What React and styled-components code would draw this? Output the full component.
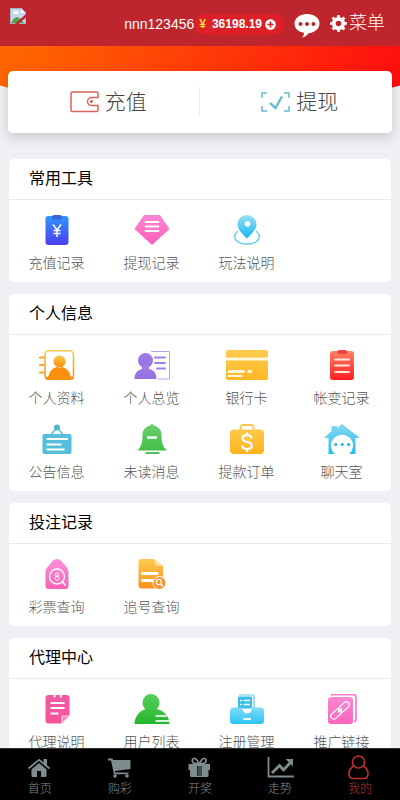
import * as React from "react";
import styled, { createGlobalStyle, css } from "styled-components";
import { FaPlusCircle } from "react-icons/fa";

const GlobalStyle = createGlobalStyle`
  * {
    box-sizing: border-box;
  }
  html {
    scrollbar-width: none;
  }
  body {
    margin: 0;
    background-color: #efeff4;
    font-family: "Liberation Sans", "Noto Sans CJK SC", sans-serif;
    font-weight: 300;
  }
  a {
    color: inherit;
    text-decoration: none;
  }
  button {
    border: none;
    padding: 0;
    background: none;
    color: inherit;
    font: inherit;
    cursor: pointer;
  }
  svg {
    display: block;
    flex: none;
  }
`;

const Page = styled.div`
  padding-bottom: 60px;
`;

const TopBar = styled.header`
  position: sticky;
  top: 0;
  z-index: 2;
  display: flex;
  align-items: center;
  height: 46px;
  padding: 2px 15px 0 10px;
  background-color: #bf252c;
  color: #ffffff;
`;

const Avatar = styled.a`
  align-self: flex-start;
  margin: 6px auto 0 0;
`;

const UserName = styled.span`
  font-size: 14px;
  font-weight: 400;
`;

const Balance = styled.button`
  && {
    display: flex;
    align-items: center;
    height: 21px;
    padding: 0 9px 0 5px;
    border-radius: 11px;
    background-color: #dd2027;
    font-size: 12px;
    font-weight: 700;
  }
  span {
    margin-right: 6px;
    color: #ffd83b;
  }
  svg {
    margin-left: 3px;
  }
`;

const ChatButton = styled.button`
  && {
    margin: 4px 10px 0 9px;
  }
`;

const MenuButton = styled.button`
  && {
    display: flex;
    align-items: center;
    gap: 2px;
    font-size: 18px;
    line-height: 24px;
  }
  && {
    padding-bottom: 3px;
  }
  svg {
    margin-top: 2px;
  }
`;

const Hero = styled.div`
  position: relative;
  padding: 25px 8px 0;
  &::before {
    content: "";
    position: absolute;
    inset: 0;
    background: linear-gradient(110deg, #ff6400 5%, #ff0f0f 95%);
    clip-path: ellipse(75% 100px at 50% -35px);
  }
`;

const Wallet = styled.div`
  position: relative;
  display: flex;
  align-items: center;
  height: 62px;
  border-radius: 5px;
  background-color: #ffffff;
  box-shadow: 0 5px 12px rgba(0, 0, 0, 0.15);
`;

const WalletLink = styled.a`
  flex: 1;
  display: flex;
  align-items: center;
  justify-content: center;
  gap: 6px;
  height: 30px;
  padding: 0 0 4px 10px;
  color: #444444;
  font-size: 21px;
  svg {
    margin-top: 4px;
  }
  & + & {
    border-left: 1px solid #eeeeee;
    padding-right: 2px;
  }
`;

const Sections = styled.main`
  display: flex;
  flex-direction: column;
  gap: 12px;
  padding: 26px 9px 0;
`;

const Section = styled.section`
  padding-bottom: 8px;
  border-radius: 5px;
  background-color: #ffffff;
`;

const SectionTitle = styled.h2`
  margin: 0;
  padding: 0 20px;
  border-bottom: 1px solid #ebebeb;
  color: #000000;
  font-size: 16px;
  font-weight: 400;
  line-height: 40px;
`;

const Grid = styled.div`
  display: grid;
  grid-template-columns: repeat(4, 1fr);
  padding-right: 2px;
`;

const Item = styled.a`
  display: flex;
  flex-direction: column;
  align-items: center;
  gap: 8px;
  padding: 15px 0 1px;
  color: #555555;
  font-size: 14px;
  line-height: 20px;
`;

const TabBar = styled.nav`
  position: fixed;
  right: 0;
  bottom: 0;
  left: 0;
  z-index: 2;
  display: flex;
  height: 52px;
  border-top: 1px solid #333333;
  background-color: #000000;
`;

const Tab = styled.a`
  flex: 1;
  display: flex;
  flex-direction: column;
  align-items: center;
  padding-top: 6px;
  color: #7f8c8d;
  font-size: 12px;
  line-height: 16px;
  svg {
    margin-bottom: 1px;
  }
  ${({ $active }) =>
    $active &&
    css`
      && {
        color: #c0302c;
      }
    `}
`;

/* vertical gradient shared by the menu icons */
const Fade = ({ id, from, to }) => (
  <linearGradient id={id} x1="0" y1="0" x2="0" y2="1">
    <stop offset="0" stopColor={from} />
    <stop offset="1" stopColor={to} />
  </linearGradient>
);

const Icon = ({ id, from, to, children }) => (
  <svg width="44" height="30" viewBox="0 0 44 30" fill="none" aria-hidden="true">
    <defs>
      <Fade id={id} from={from} to={to} />
    </defs>
    {children}
  </svg>
);

const RechargeIcon = () => (
  <Icon id="recharge" from="#2f96fb" to="#4f3df0">
    <rect x="10.500" y="1" width="23" height="29" rx="3" fill="url(#recharge)" />
    <rect x="17" y="0" width="10" height="4.500" rx="2" fill="#3a62d8" />
    <path d="M18 9.500l4 5.500 4-5.500M22 15v7M18.500 15.500h7M18.500 18.500h7" stroke="#fff" strokeWidth="1.500" />
  </Icon>
);

const WithdrawIcon = () => (
  <Icon id="withdraw" from="#fb87d3" to="#fd5fb9">
    <path d="M14 0h16l9.500 14L22 30 4.500 14z" fill="url(#withdraw)" />
    <path d="M15.500 7h13M15.500 11.500h13M15.500 16h13" stroke="#fff" strokeWidth="1.800" strokeLinecap="round" />
  </Icon>
);

const PlayIcon = () => (
  <Icon id="play" from="#9ce0ee" to="#14b7f5">
    <path
      d="M12.500 16.500C6 22 11 29 22 29s16-7 9.500-12.500"
      stroke="#6bcdf0"
      strokeWidth="1.500"
      strokeLinecap="round"
    />
    <path d="M22 0a9.500 9.500 0 0 1 9.500 9.500c0 5-4.500 9-9.500 14-5-5-9.500-9-9.500-14A9.500 9.500 0 0 1 22 0z" fill="url(#play)" />
    <circle cx="22.500" cy="9" r="2.800" fill="#fff" />
  </Icon>
);

const ProfileIcon = () => (
  <Icon id="profile" from="#f7c64b" to="#fd8c0c">
    <rect x="10" y=".8" width="28.500" height="28.500" rx="4" stroke="url(#profile)" strokeWidth="1.600" />
    <circle cx="24.500" cy="11.500" r="6" fill="url(#profile)" />
    <path d="M10.500 27c3 0 3-1 4-4 1-3 4-5 7-6q3 1.500 6 0c3 1 6 3 7 6 1 3 1 4 4 4v2.500h-28z" fill="#fd8f0f" />
    <path d="M5 7.500h4M5 15h4M5 22.500h4" stroke="#f9a72b" strokeWidth="2.200" strokeLinecap="round" />
  </Icon>
);

const OverviewIcon = () => (
  <Icon id="overview" from="#a37be8" to="#9371e2">
    <path d="M21 1.500h18.500v27.500H28" stroke="#b9a3ef" />
    <circle cx="15.500" cy="10.500" r="7.500" fill="url(#overview)" />
    <path d="M12 15h7v4c5 1 7.500 4 7.500 10h-22c0-6 3-9 7.500-10z" fill="url(#overview)" />
    <path d="M25 7.500h10M25 13h10M27 18.500h8" stroke="#a17fe8" strokeWidth="1.800" strokeLinecap="round" />
  </Icon>
);

const BankIcon = () => (
  <Icon id="bank" from="#ffca4c" to="#fdb826">
    <rect x="1" width="42" height="30" rx="2" fill="url(#bank)" />
    <path d="M1 9h42" stroke="#fff8df" strokeWidth="3" />
    <path d="M3 21.500h16.500M22.500 21.500h4.500" stroke="#fff8df" strokeWidth="3" />
    <path d="M3 26h14.500" stroke="#fff8df" strokeWidth="2" />
  </Icon>
);

const ChangeIcon = () => (
  <Icon id="change" from="#ff8064" to="#fe1f21">
    <rect x="10" y="1" width="24" height="29" rx="3" fill="url(#change)" />
    <rect x="17.500" y="0" width="9.500" height="4" rx="1.500" fill="#ee4340" />
    <path d="M15 9.500h14M15 15.500h14M15 22h14" stroke="#ffe7e2" strokeWidth="1.800" strokeLinecap="round" />
  </Icon>
);

const NoticeIcon = () => (
  <Icon id="notice" from="#56bfdc" to="#56bfdc">
    <rect x="7.500" y="10" width="29" height="20" rx="2" fill="url(#notice)" />
    <path d="M16 10.500l6-7 6 7" stroke="#56bfdc" strokeWidth="1.500" />
    <circle cx="22" cy="3.500" r="3" fill="#54b5d3" />
    <path d="M11.500 15h21.500M11.500 20.500h15M11.500 25.500h18" stroke="#fff" strokeWidth="2" />
  </Icon>
);

const BellIcon = () => (
  <Icon id="bell" from="#66cf69" to="#45c04a">
    <path
      d="M20.500 1.500a1.500 1.500 0 0 1 3 0c5 1 8 4.500 8 9.500 0 7 1 11.500 5.500 15.500H7.500c4-4 5-8.500 5-15.500 0-5 3-8.500 8-9.500z"
      fill="url(#bell)"
    />
    <path d="M15.500 29h14" stroke="#45b34a" strokeWidth="1.800" />
    <path d="M17 13.500h10" stroke="#fff" strokeWidth="2.400" />
  </Icon>
);

const OrderIcon = () => (
  <Icon id="order" from="#fdc94e" to="#feb21c">
    <path d="M15.500 6V3.500q0-2.500 2.500-2.500h8q2.500 0 2.500 2.500V6" stroke="#fdc552" strokeWidth="1.800" />
    <rect x="5" y="5.500" width="34" height="24.500" rx="4" fill="url(#order)" />
    <path
      d="M26.500 14.500c-.3-2.200-2-3.300-4.500-3.300s-4.500 1.200-4.500 3.300 2 2.900 4.500 3.400 4.800 1.300 4.800 3.700-2 3.400-4.800 3.400-4.600-1.200-4.800-3.500M22 8.500v3M22 24.500v3.500"
      stroke="#fff"
      strokeWidth="2.200"
    />
  </Icon>
);

const ChatRoomIcon = () => (
  <Icon id="room" from="#84d8ef" to="#2cbcf3">
    <path d="M4 14L11.500 7V3q0-1 1-1H17v2L22 0l18 14h-4.500v16h-27V14z" fill="url(#room)" />
    <path d="M15.500 30.500A11 11 0 1 1 28.500 30.500z" fill="#fff" />
    <circle cx="15.800" cy="20.500" r="1.600" fill="#31aee0" />
    <circle cx="22.200" cy="20.500" r="1.600" fill="#31aee0" />
    <circle cx="28.600" cy="20.500" r="1.600" fill="#31aee0" />
  </Icon>
);

const LotteryIcon = () => (
  <Icon id="lottery" from="#fa90db" to="#fb62b5">
    <path d="M18 1.500q4-3 8 0l5.500 6.500q2 2.500 2 5v14q0 3-3 3h-17q-3 0-3-3V13q0-2.500 2-5z" fill="url(#lottery)" />
    <circle cx="22" cy="17.500" r="7.500" stroke="#fff" strokeWidth="1.300" />
    <path d="M27.500 23l2.500 3" stroke="#fff" strokeWidth="1.800" strokeLinecap="round" />
    <circle cx="22" cy="15.500" r="1.700" stroke="#fff" />
    <circle cx="22" cy="19.300" r="2" stroke="#fff" />
  </Icon>
);

const TraceIcon = () => (
  <Icon id="trace" from="#fdcb50" to="#fd901b">
    <path d="M11.500 0H24l9 7v22.500H11.500q-3 0-3-3V3q0-3 3-3z" fill="url(#trace)" />
    <path d="M24.500 0v4q0 2.500 2.500 2.500h5.500z" fill="#ffe3a1" />
    <path d="M12.500 14.500h14.500M12.500 21.500h10" stroke="#fff" strokeWidth="3.200" strokeLinecap="round" />
    <circle cx="29.500" cy="24" r="6.500" fill="#f9942c" stroke="#fff" />
    <circle cx="28.800" cy="23" r="2.600" stroke="#fff" strokeWidth="1.200" />
    <path d="M30.800 25l2.200 2.500" stroke="#fff" strokeWidth="1.600" />
  </Icon>
);

const AgentIcon = () => (
  <Icon id="agent" from="#f55aa4" to="#f7529c">
    <path d="M13.500 1h18q3 0 3 3v18l-8 7.500h-13q-3 0-3-3V4q0-3 3-3z" fill="url(#agent)" />
    <path d="M27 29.500V22h7.500z" fill="#f986bd" stroke="#fff" strokeWidth=".8" />
    <path d="M19.500 1v2.500M26 1v2.500" stroke="#fff" strokeWidth="1.800" />
    <path d="M15.500 9h14M15.500 14h14M15.500 19.500h8" stroke="#fff" strokeWidth="2.200" />
  </Icon>
);

const UsersIcon = () => (
  <Icon id="users" from="#55d05a" to="#26b52d">
    <path
      d="M21 0a8.500 8.500 0 0 1 8.500 8.500c0 3-1.200 5-3 6.500 7 1.500 13 7 13 15h-35c0-8 6-13.500 11-15-2-1.500-3-3.500-3-6.500A8.500 8.500 0 0 1 21 0z"
      fill="url(#users)"
    />
    <path d="M25.500 22h11M25.500 27h14" stroke="#d9f5da" strokeWidth="1.800" />
  </Icon>
);

const RegisterIcon = () => (
  <Icon id="register" from="#7edbf5" to="#2ec3f4">
    <path d="M14 1h13q2 0 2 2v12" stroke="#5acbe8" strokeWidth="1.200" />
    <rect x="13" y="2.500" width="14" height="14" rx="1.500" fill="#36bce6" />
    <path d="M15 6.500h2M18.500 6.500h6.500M15 10.500h2M18.500 10.500h6.500" stroke="#fff" strokeWidth="1.600" />
    <path
      d="M9 13.500h7.500q1 0 1.500 2 1 4 4 4t4-4q.5-2 1.500-2H35q4 0 4 4V27q0 3-3 3H8q-3 0-3-3v-9.500q0-4 4-4z"
      fill="url(#register)"
    />
    <path d="M17 14.500h10q-1 4.500-5 4.500t-5-4.500z" fill="#fff" />
    <path d="M18 25h8" stroke="#fff" strokeWidth="1.800" />
  </Icon>
);

const LinkIcon = () => (
  <Icon id="promo" from="#fa89d3" to="#fb64bc">
    <path d="M11 1.500q.5-1 2-1h20q3 0 3 3v22q0 2-2 2" stroke="#fb83cd" strokeWidth="1.800" />
    <rect x="8" y="3" width="25" height="27" rx="3" fill="url(#promo)" />
    <g transform="rotate(-42 20 16.500)" stroke="#fff" strokeWidth="1.200">
      <rect x="8.500" y="13.500" width="12.500" height="6" rx="3" />
      <rect x="19" y="13.500" width="12.500" height="6" rx="3" />
      <path d="M17 16.500h6" />
    </g>
  </Icon>
);

const BrokenImage = () => (
  <svg width="16" height="16" viewBox="0 0 16 16" role="img" aria-label="logo">
    <path d="M0 0h11l5 5v11H0z" fill="#c5d7f5" />
    <path d="M11 0l5 5h-5z" fill="#fff" />
    <path d="M3 5q0-2 2-2 2-1 3 1 1 0 1 2H3z" fill="#fff" />
    <path d="M1 15q3-6 6-6t7 6z" fill="#52a447" />
    <path d="M.5 15.500V.5H11L15.500 5v10.500z" fill="none" stroke="#a9b2c2" />
    <path d="M16 6L5 16h3.500L16 9.500z" fill="#bf252c" />
  </svg>
);

const ChatBubble = () => (
  <svg width="26" height="24" viewBox="0 0 26 24" aria-hidden="true">
    <path d="M13 0c7 0 12.500 4 12.500 9.500S20 19 14.500 19.200C13 21.500 11 23 8 23.500c1.500-1.500 2-3 2-4.700C4.500 18 .5 14.500.5 9.500.5 4 6 0 13 0z" fill="#fff" />
    <circle cx="6.500" cy="10" r="2" fill="#bf252c" />
    <circle cx="13" cy="10" r="2" fill="#bf252c" />
    <circle cx="19.500" cy="10" r="2" fill="#bf252c" />
  </svg>
);

/* the dashed ring makes the eight teeth */
const Gear = () => (
  <svg width="17" height="17" viewBox="0 0 17 17" fill="none" stroke="#fff" aria-hidden="true">
    <circle cx="8.500" cy="8.500" r="4.700" strokeWidth="3.800" />
    <circle
      cx="8.500"
      cy="8.500"
      r="7"
      strokeWidth="2.800"
      pathLength="16"
      strokeDasharray="1 1"
      strokeDashoffset=".5"
    />
  </svg>
);

const WalletIcon = () => (
  <svg width="29" height="22" viewBox="0 0 29 22" fill="none" stroke="#d9625d" strokeWidth="1.500" aria-hidden="true">
    <path d="M28 6.500V2.500Q28 1 26.500 1H2.500Q1 1 1 2.500v16Q1 20.500 2.500 20.500h24q1.500 0 1.500-2V14.500h-6.500a4 4 0 0 1 0-8z" />
    <circle cx="21.500" cy="10.500" r=".8" />
  </svg>
);

const CashIcon = () => (
  <svg width="29" height="20" viewBox="0 0 29 20" fill="none" stroke="#68bdd0" strokeWidth="1.500" aria-hidden="true">
    <path d="M1 6V1h5M23 1h5v5M28 14v5h-5M6 19H1v-5" />
    <path d="M9 11l5.500 5L21 4.500" strokeWidth="2.400" />
  </svg>
);

const TabIcon = ({ children }) => (
  <svg width="28" height="25" viewBox="0 0 28 25" fill="currentColor" aria-hidden="true">
    {children}
  </svg>
);

const HomeIcon = () => (
  <TabIcon>
    <path d="M13 8l7.500 6.200v6.800q0 1-1 1h-4.500v-6h-4v6H6.500q-1 0-1-1v-6.800z" />
    <path d="M2.500 13.500L13 4.800l10.500 8.700" fill="none" stroke="currentColor" strokeWidth="1.800" />
    <path d="M17.500 4H21v7.500l-3.500-3z" />
  </TabIcon>
);

const CartIcon = () => (
  <TabIcon>
    <path d="M2 3.500h4.500l.5 1.500H24.500v9L9 16l.4 1.500H22.500v1.800H8L5 5.500H2z" />
    <circle cx="9" cy="21" r="1.800" />
    <circle cx="21" cy="21" r="1.800" />
  </TabIcon>
);

const GiftIcon = () => (
  <TabIcon>
    <path d="M2.500 9H11v6H2.500zM15.500 9H24v6h-8.500zM4 15h7v7H5.500Q4 22 4 20.500zM15.500 15h7v5.500q0 1.500-1.500 1.500h-5.500zM11 9h4.500v2H11zM11 20.500h4.500V22H11z" />
    <path d="M11.500 11h3.500v9h-3.500z" opacity=".55" />
    <path d="M13 9c-2-5-4-6-5.500-5.500S5.500 8 9 8.500zm.5 0c2-5 4-6 5.500-5.500S21 8 17.500 8.500z" fill="none" stroke="currentColor" strokeWidth="1.800" />
  </TabIcon>
);

const TrendIcon = () => (
  <TabIcon>
    <path d="M2.500 2v19.500H28" fill="none" stroke="currentColor" strokeWidth="1.800" />
    <path d="M6 18l7.500-7.500 4 4.500 6.500-7" fill="none" stroke="currentColor" strokeWidth="2.800" />
    <path d="M19.500 4H27v7.500z" />
  </TabIcon>
);

const MeIcon = () => (
  <TabIcon>
    <g fill="none" stroke="currentColor" strokeWidth="1.600">
      <circle cx="12.500" cy="7" r="6" />
      <path d="M8 11c-3 1.500-5 4-5 7.500q0 5 4 5h11q4 0 4-5c0-3.500-2-6-5-7.500" />
    </g>
  </TabIcon>
);

const sections = [
  {
    title: "常用工具",
    items: [
      { label: "充值记录", icon: RechargeIcon },
      { label: "提现记录", icon: WithdrawIcon },
      { label: "玩法说明", icon: PlayIcon },
    ],
  },
  {
    title: "个人信息",
    items: [
      { label: "个人资料", icon: ProfileIcon },
      { label: "个人总览", icon: OverviewIcon },
      { label: "银行卡", icon: BankIcon },
      { label: "帐变记录", icon: ChangeIcon },
      { label: "公告信息", icon: NoticeIcon },
      { label: "未读消息", icon: BellIcon },
      { label: "提款订单", icon: OrderIcon },
      { label: "聊天室", icon: ChatRoomIcon },
    ],
  },
  {
    title: "投注记录",
    items: [
      { label: "彩票查询", icon: LotteryIcon },
      { label: "追号查询", icon: TraceIcon },
    ],
  },
  {
    title: "代理中心",
    items: [
      { label: "代理说明", icon: AgentIcon },
      { label: "用户列表", icon: UsersIcon },
      { label: "注册管理", icon: RegisterIcon },
      { label: "推广链接", icon: LinkIcon },
    ],
  },
];

const tabs = [
  { label: "首页", icon: HomeIcon },
  { label: "购彩", icon: CartIcon },
  { label: "开奖", icon: GiftIcon },
  { label: "走势", icon: TrendIcon },
  { label: "我的", icon: MeIcon },
];

export default function App() {
  const [activeTab, setActiveTab] = React.useState("我的");

  return (
    <Page>
      <GlobalStyle />
      <TopBar>
        <Avatar href="#">
          <BrokenImage />
        </Avatar>
        <UserName>nnn123456</UserName>
        <Balance type="button">
          <span>¥</span>
          36198.19
          <FaPlusCircle size={11} />
        </Balance>
        <ChatButton type="button" aria-label="聊天">
          <ChatBubble />
        </ChatButton>
        <MenuButton type="button">
          <Gear />
          菜单
        </MenuButton>
      </TopBar>

      <Hero>
        <Wallet>
          <WalletLink href="#">
            <WalletIcon />
            充值
          </WalletLink>
          <WalletLink href="#">
            <CashIcon />
            提现
          </WalletLink>
        </Wallet>
      </Hero>

      <Sections>
        {sections.map(({ title, items }) => (
          <Section key={title}>
            <SectionTitle>{title}</SectionTitle>
            <Grid>
              {items.map(({ label, icon: ItemIcon }) => (
                <Item key={label} href="#">
                  <ItemIcon />
                  {label}
                </Item>
              ))}
            </Grid>
          </Section>
        ))}
      </Sections>

      <TabBar>
        {tabs.map(({ label, icon: Glyph }) => (
          <Tab
            key={label}
            href="#"
            $active={label === activeTab}
            onClick={() => setActiveTab(label)}
          >
            <Glyph />
            {label}
          </Tab>
        ))}
      </TabBar>
    </Page>
  );
}
